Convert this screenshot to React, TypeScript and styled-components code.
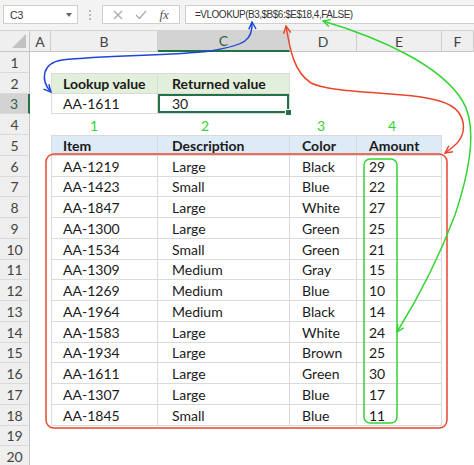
import React from 'react';
import styled, { createGlobalStyle, css } from 'styled-components';

const GlobalStyle = createGlobalStyle`
  html, body {
    margin: 0;
    padding: 0;
    background: #fff;
  }
  body {
    font-family: Lato, "Open Sans", sans-serif;
  }
`;

const Screen = styled.div`
  position: relative;
  width: 474px;
  height: 465px;
  overflow: hidden;
  background: #fff;
`;

/* ---------- formula bar ---------- */

const FormulaBar = styled.div`
  display: flex;
  align-items: flex-start;
  box-sizing: border-box;
  height: 31px;
  padding: 5px 0 0 3px;
  background: #f3f3f3;
  border-bottom: 1px solid #d4d4d4;
`;

const Box = styled.div`
  display: flex;
  align-items: center;
  box-sizing: border-box;
  height: 19px;
  background: #fff;
  border: 1px solid #cfcfcf;
  font-family: "Liberation Sans", Arial, sans-serif;
  font-size: 10.5px;
  color: #333;
`;

const NameBox = styled(Box)`
  width: 75px;
  padding: 0 5px 0 6px;
  justify-content: space-between;
`;

const Caret = styled.span`
  width: 0;
  height: 0;
  border-left: 3px solid transparent;
  border-right: 3px solid transparent;
  border-top: 4px solid #666;
`;

const Dots = styled.div`
  display: flex;
  flex-direction: column;
  align-items: center;
  justify-content: center;
  gap: 2px;
  width: 24px;
  height: 19px;

  span {
    width: 2px;
    height: 2px;
    background: #b8b8b8;
  }
`;

const ButtonBox = styled(Box)`
  width: 78px;
  justify-content: space-around;
  padding: 0 4px;
`;

const Fx = styled.span`
  font-family: "Liberation Serif", serif;
  font-style: italic;
  font-size: 13px;
  color: #555;
`;

const FormulaBox = styled(Box)`
  flex: 1;
  margin-left: 5px;
  padding-left: 9px;
  border-right: none;
  font-size: 10px;
  letter-spacing: -0.5px;
`;

/* ---------- sheet ---------- */

const Sheet = styled.div`
  display: grid;
  grid-template-columns: 30px 21px 107px 132px 67px 85px 1fr;
  grid-template-rows: 21px;
  grid-auto-rows: 20.75px;
  font-size: 14px;
`;

const Corner = styled.div`
  position: relative;
  background: #efefef;
  border-right: 1px solid #c6c6c6;
  border-bottom: 1px solid #c6c6c6;

  &::after {
    content: '';
    position: absolute;
    right: 3px;
    bottom: 3px;
    border-left: 14px solid transparent;
    border-bottom: 14px solid #c2c2c2;
  }
`;

const ColHeader = styled.div<{ $selected?: boolean }>`
  display: flex;
  align-items: center;
  justify-content: center;
  box-sizing: border-box;
  color: #444;
  background: #efefef;
  border-right: 1px solid #cdcdcd;
  border-bottom: 1px solid #c6c6c6;

  ${p =>
    p.$selected &&
    css`
      background: #d3d3d3;
      color: #2f5f45;
      border-bottom: 2px solid #217346;
    `}
`;

const RowHeader = styled.div<{ $selected?: boolean }>`
  display: flex;
  align-items: center;
  justify-content: center;
  box-sizing: border-box;
  padding-top: 1px;
  color: #444;
  background: #efefef;
  border-right: 1px solid #c6c6c6;
  border-bottom: 1px solid #dadada;

  ${p =>
    p.$selected &&
    css`
      background: #d3d3d3;
      color: #2f5f45;
      border-right: 2px solid #217346;
    `}
`;

interface CellProps {
  $pad?: number;
  $bold?: boolean;
  $fill?: string;
  $color?: string;
  $grid?: boolean;
  $top?: boolean;
  $left?: boolean;
  $selected?: boolean;
}

const Cell = styled.div<CellProps>`
  position: relative;
  display: flex;
  align-items: center;
  box-sizing: border-box;
  padding-left: ${p => p.$pad ?? 4}px;
  padding-top: 1px;
  white-space: nowrap;
  color: ${p => p.$color ?? '#1b1b1b'};
  font-weight: ${p => (p.$bold ? 700 : 400)};
  background: ${p => p.$fill ?? 'transparent'};

  ${p =>
    p.$grid &&
    css`
      border-right: 1px solid #dadada;
      border-bottom: 1px solid #dadada;
    `}
  ${p => p.$top && css`border-top: 1px solid #dadada;`}
  ${p => p.$left && css`border-left: 1px solid #dadada;`}

  ${p =>
    p.$selected &&
    css`
      box-shadow: inset 0 0 0 2px #217346;
      &::after {
        content: '';
        position: absolute;
        right: -3px;
        bottom: -3px;
        width: 5px;
        height: 5px;
        background: #217346;
        border: 1px solid #fff;
      }
    `}
`;

const Overlay = styled.svg`
  position: absolute;
  left: 0;
  top: 0;
  width: 474px;
  height: 465px;
  pointer-events: none;
  overflow: visible;
`;

/* ---------- data ---------- */

const columns = ['A', 'B', 'C', 'D', 'E', 'F'];
const pads = [4, 11, 14, 12, 12, 4];

const items = [
  ['AA-1219', 'Large', 'Black', '29'],
  ['AA-1423', 'Small', 'Blue', '22'],
  ['AA-1847', 'Large', 'White', '27'],
  ['AA-1300', 'Large', 'Green', '25'],
  ['AA-1534', 'Small', 'Green', '21'],
  ['AA-1309', 'Medium', 'Gray', '15'],
  ['AA-1269', 'Medium', 'Blue', '10'],
  ['AA-1964', 'Medium', 'Black', '14'],
  ['AA-1583', 'Large', 'White', '24'],
  ['AA-1934', 'Large', 'Brown', '25'],
  ['AA-1611', 'Large', 'Green', '30'],
  ['AA-1307', 'Large', 'Blue', '17'],
  ['AA-1845', 'Small', 'Blue', '11'],
];

const GREEN_FILL = '#e2efda';
const BLUE_FILL = '#ddebf7';
const MARK_GREEN = '#35d435';
const numberPads = [0, 39, 43, 27, 31];

function cellFor(row: number, col: number): CellProps & { text?: string } {
  const base: CellProps = { $pad: pads[col] };
  // lookup table B2:C3
  if ((row === 2 || row === 3) && (col === 1 || col === 2)) {
    const header = row === 2;
    return {
      ...base,
      $grid: true,
      $top: header,
      $left: col === 1,
      $bold: header,
      $fill: header ? GREEN_FILL : undefined,
      $selected: row === 3 && col === 2,
      text: header ? ['Lookup value', 'Returned value'][col - 1] : ['AA-1611', '30'][col - 1],
    };
  }
  // column numbers
  if (row === 4 && col >= 1 && col <= 4) {
    return { $pad: numberPads[col], $color: MARK_GREEN, text: String(col) };
  }
  // main table B5:E18
  if (row >= 5 && row <= 18 && col >= 1 && col <= 4) {
    const header = row === 5;
    return {
      ...base,
      $grid: true,
      $top: header,
      $left: col === 1,
      $bold: header,
      $fill: header ? BLUE_FILL : undefined,
      text: header ? ['Item', 'Description', 'Color', 'Amount'][col - 1] : items[row - 6][col - 1],
    };
  }
  return base;
}

function Arrow({ id, color }: { id: string; color: string }) {
  return (
    <marker
      id={id}
      viewBox="0 0 10 10"
      refX="9"
      refY="5"
      markerWidth="9"
      markerHeight="9"
      markerUnits="userSpaceOnUse"
      orient="auto-start-reverse"
    >
      <path d="M1,1 L9,5 L1,9" fill="none" stroke={color} strokeWidth="1.6" />
    </marker>
  );
}

export default function App() {
  const rows = Array.from({ length: 20 }, (_, i) => i + 1);

  return (
    <Screen>
      <GlobalStyle />
      <FormulaBar>
        <NameBox>
          C3
          <Caret />
        </NameBox>
        <Dots>
          <span />
          <span />
          <span />
        </Dots>
        <ButtonBox>
          <svg width="10" height="10" viewBox="0 0 10 10">
            <path d="M1,1 L9,9 M9,1 L1,9" stroke="#a9a9a9" strokeWidth="1.2" />
          </svg>
          <svg width="12" height="10" viewBox="0 0 12 10">
            <path d="M1,5 L4.5,8.5 L11,1" fill="none" stroke="#a9a9a9" strokeWidth="1.2" />
          </svg>
          <Fx>fx</Fx>
        </ButtonBox>
        <FormulaBox>=VLOOKUP(B3,$B$6:$E$18,4,FALSE)</FormulaBox>
      </FormulaBar>

      <Sheet>
        <Corner />
        {columns.map(c => (
          <ColHeader key={c} $selected={c === 'C'}>
            {c}
          </ColHeader>
        ))}
        {rows.map(r => (
          <React.Fragment key={r}>
            <RowHeader $selected={r === 3}>{r}</RowHeader>
            {columns.map((c, ci) => {
              const { text, ...props } = cellFor(r, ci);
              return (
                <Cell key={c} {...props}>
                  {text}
                </Cell>
              );
            })}
          </React.Fragment>
        ))}
      </Sheet>

      <Overlay viewBox="0 0 474 465">
        <defs>
          <Arrow id="blue" color="#1f47d6" />
          <Arrow id="red" color="#e8472b" />
          <Arrow id="green" color={MARK_GREEN} />
        </defs>
        <rect x="46" y="154" width="401" height="274" rx="8" fill="none" stroke="#e8472b" strokeWidth="1.5" />
        <rect x="364" y="159" width="33" height="264" rx="6" fill="none" stroke={MARK_GREEN} strokeWidth="1.5" />
        <path
          d="M252,22 C253,40 246,45 210,51 C170,56 110,55 62,60 C42,63 40,80 51,92"
          fill="none"
          stroke="#1f47d6"
          strokeWidth="1.5"
          markerStart="url(#blue)"
          markerEnd="url(#blue)"
        />
        <path
          d="M286,26 C290,50 294,72 311,83 C330,92 370,91 421,97 C448,101 460,108 463,122 C466,138 455,146 445,153"
          fill="none"
          stroke="#e8472b"
          strokeWidth="1.5"
          markerStart="url(#red)"
          markerEnd="url(#red)"
        />
        <path
          d="M323,21 C380,38 440,65 462,100 C478,125 470,170 455,215 C440,255 420,295 397,332"
          fill="none"
          stroke={MARK_GREEN}
          strokeWidth="1.5"
          markerStart="url(#green)"
          markerEnd="url(#green)"
        />
      </Overlay>
    </Screen>
  );
}
